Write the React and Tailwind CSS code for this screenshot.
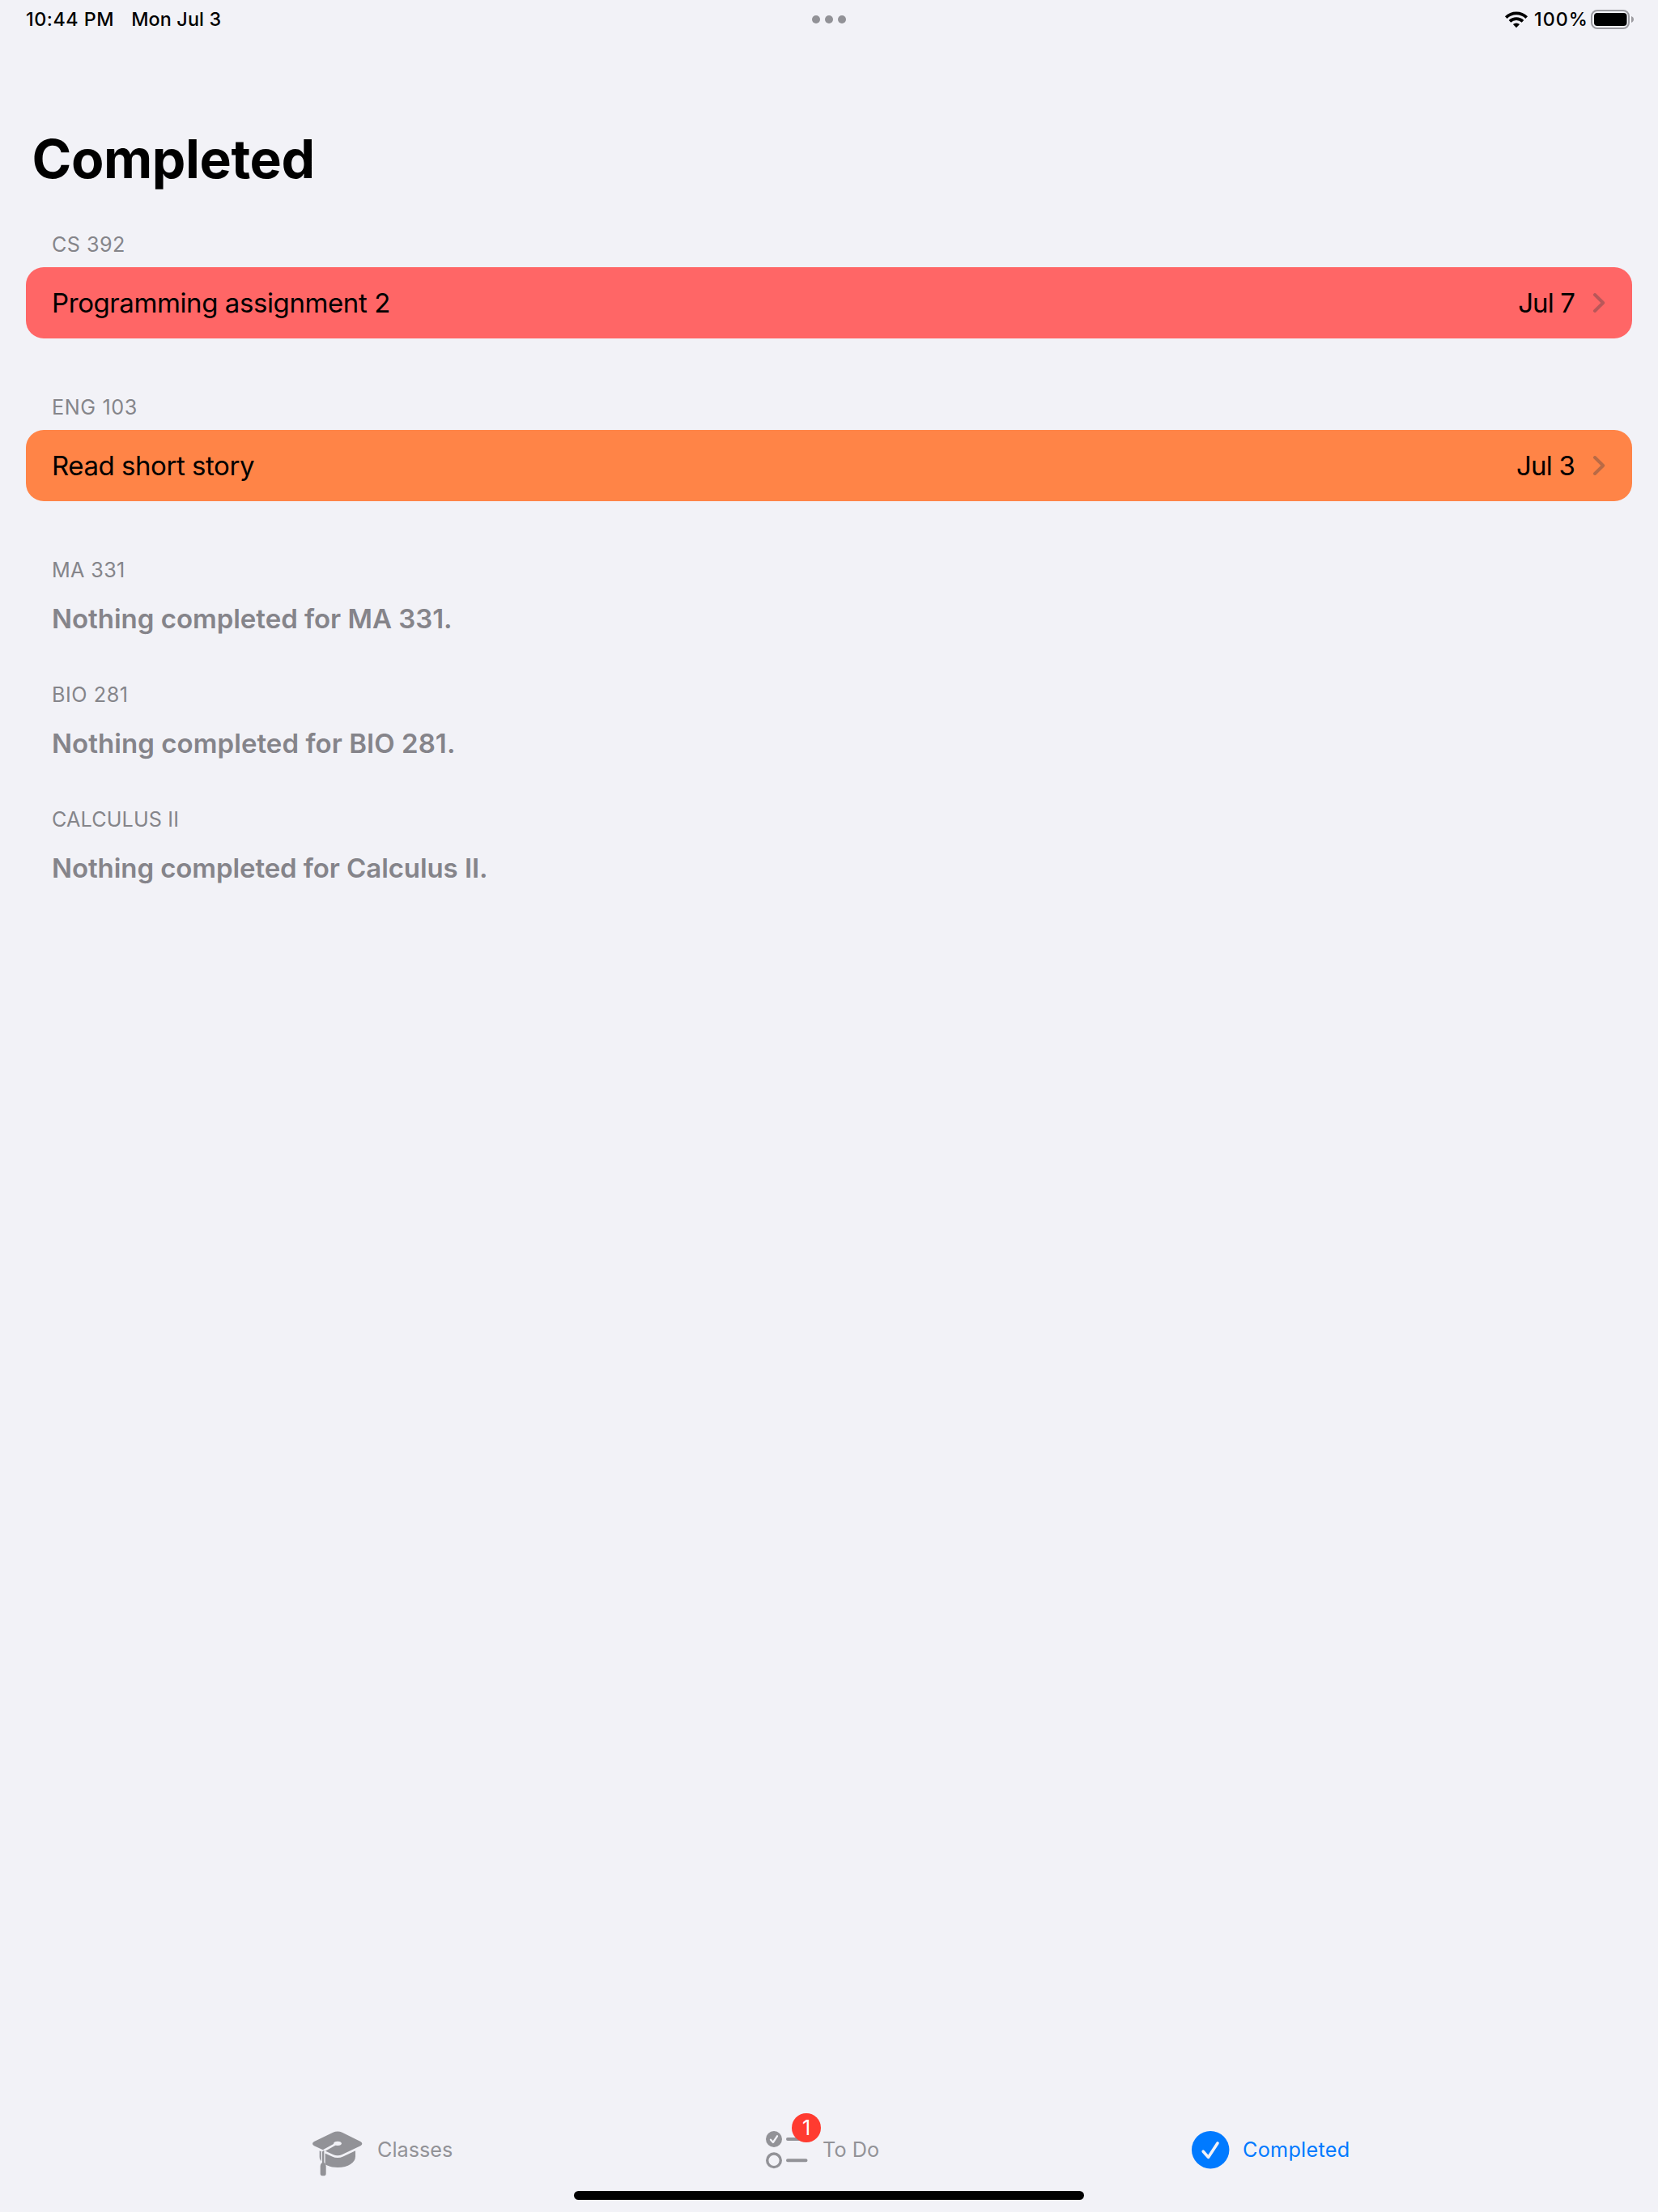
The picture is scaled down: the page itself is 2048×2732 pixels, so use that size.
import React from "react";

const SECTIONS = [
  { name: "CS 392", spacing: "tracking-[0.44px]", item: "Programming assignment 2", itemSpacing: "tracking-[-0.41px]", due: "Jul 7", dueSpacing: "tracking-[-0.9px]", color: "bg-[#ff6666]" },
  { name: "ENG 103", spacing: "tracking-[0.6px]", item: "Read short story", itemSpacing: "tracking-[-0.45px]", due: "Jul 3", dueSpacing: "tracking-[-0.8px]", color: "bg-[#ff8447]" },
  { name: "MA 331", spacing: "tracking-[0.34px]", itemSpacing: "tracking-[-0.02px]" },
  { name: "BIO 281", spacing: "tracking-[0.54px]", itemSpacing: "tracking-[0.06px]" },
  { name: "CALCULUS II", label: "Calculus II", spacing: "tracking-[0.12px]", itemSpacing: "tracking-[-0.085px]" },
];

function WifiIcon() {
  return (
    <svg className="h-[22px] w-[30px]" viewBox="0 0 30 22" fill="none" stroke="#000" strokeWidth="3.8">
      <path d="M2.3 8.6A18.2 18.2 0 0 1 27.7 8.6" />
      <path d="M7 13.4A11.6 11.6 0 0 1 23 13.4" />
      <path d="M15 21.2L10.9 17.1A5.9 5.9 0 0 1 19.1 17.1Z" fill="#000" stroke="none" />
    </svg>
  );
}

function BatteryIcon() {
  return (
    <svg className="h-6 w-[54px]" viewBox="0 0 54 24">
      <rect x="1" y="1" width="46" height="22" rx="7" fill="none" stroke="#9c9ba0" strokeWidth="2" />
      <rect x="4" y="4" width="40.5" height="16" rx="4" fill="#000" />
      <path d="M50 8C52 8.8 53 10.2 53 12S52 15.2 50 16Z" fill="#9c9ba0" />
    </svg>
  );
}

function CapIcon() {
  return (
    <svg className="h-14 w-[62px]" viewBox="48 96 186 168">
      <path d="M74 150V192C74 198 76 204 82 210C93 221 112 231 142 231C180 231 207 214 207 190V150Z" fill="#929297" />
      <path d="M54 135L124 101Q141 94 158 101L226 135Q238 143 226 151L158 183Q141 191 124 183L54 151Q42 143 54 135Z" fill="#929297" stroke="#f2f2f7" strokeWidth="16" />
      <path d="M54 135L124 101Q141 94 158 101L226 135Q238 143 226 151L158 183Q141 191 124 183L54 151Q42 143 54 135Z" fill="#929297" />
      <path d="M87.5 225V174Q87.5 170 91 168L132 145" fill="none" stroke="#f2f2f7" strokeWidth="8" />
      <path d="M87.5 225V172" stroke="#f2f2f7" strokeWidth="15" />
      <ellipse cx="141" cy="142" rx="14.5" ry="8" fill="#f2f2f7" />
      <path d="M84 174Q84 170 91 168V212Q98 218 98 226V254Q98 262 87.5 262Q77 262 77 254V226Q77 218 84 212Z" fill="#929297" />
    </svg>
  );
}

function ChecklistIcon() {
  return (
    <svg className="h-[47px] w-[52px]" viewBox="0 0 52 47" fill="none" strokeLinecap="round">
      <circle cx="10" cy="10" r="10" fill="#929297" />
      <path d="M6 10.7L8.9 14L14 6.3" stroke="#f2f2f7" strokeWidth="2.3" strokeLinejoin="round" />
      <circle cx="10" cy="36.3" r="8.3" stroke="#929297" strokeWidth="3.4" />
      <path d="M27 10H49.5M27 36.3H49.5" stroke="#929297" strokeWidth="4" />
    </svg>
  );
}

function CheckCircleIcon() {
  return (
    <svg className="h-[47px] w-[47px]" viewBox="0 0 47 47" fill="none">
      <circle cx="23.2" cy="23.2" r="23.2" fill="#007aff" />
      <path d="M14.2 25.2L20.5 32.4L32 15" stroke="#f2f2f7" strokeWidth="3.6" strokeLinecap="round" strokeLinejoin="round" />
    </svg>
  );
}

function Chevron() {
  return (
    <svg className="h-6 w-4" viewBox="0 0 16 24" fill="none" stroke="#3c3c43" strokeOpacity="0.36" strokeWidth="3.9" strokeLinecap="round" strokeLinejoin="round">
      <path d="M2 2L12.2 12L2 22" />
    </svg>
  );
}

function StatusBar() {
  return (
    <header className="grid h-12 grid-cols-3 text-[23.3px] leading-[48px] font-medium">
      <div className="flex gap-[21px] pl-8">
        <span className="tracking-[0.55px]">10:44 PM</span>
        <span className="tracking-[0.15px]">Mon Jul 3</span>
      </div>
      <div className="flex items-center justify-center gap-1.5">
        <i className="size-2.5 rounded-full bg-[#929297]" />
        <i className="size-2.5 rounded-full bg-[#929297]" />
        <i className="size-2.5 rounded-full bg-[#929297]" />
      </div>
      <div className="flex items-center justify-end pr-[29px]">
        <WifiIcon />
        <span className="ml-[7px] w-[70px] tracking-[1px]">100%</span>
        <BatteryIcon />
      </div>
    </header>
  );
}

function Section({ section }) {
  return (
    <section className={section.item ? "pb-[69px]" : "pb-[46px]"}>
      <h2 className={`mb-3 px-8 text-[25.2px] leading-8 text-[#85858a] ${section.spacing}`}>{section.name}</h2>
      {section.item ? (
        <div className={`flex h-[88px] items-center rounded-[22px] px-8 text-[33px] leading-10 ${section.color}`}>
          <span className={`flex-1 ${section.itemSpacing}`}>{section.item}</span>
          <span className={`mr-[23px] ${section.dueSpacing}`}>{section.due}</span>
          <Chevron />
        </div>
      ) : (
        <p className={`px-8 text-[33px] leading-[64px] font-semibold text-[#85848a] ${section.itemSpacing}`}>
          Nothing completed for {section.label || section.name}.
        </p>
      )}
    </section>
  );
}

function TabBar() {
  return (
    <nav className="flex h-[94px] items-center pl-[386px] text-[25.2px] leading-8 text-[#929297]">
      <div className="flex w-[560px] items-center">
        <div className="pt-[10px]"><CapIcon /></div>
        <span className="ml-[18px] tracking-[0px]">Classes</span>
      </div>
      <div className="flex w-[526px] items-center">
        <div className="relative">
          <ChecklistIcon />
          <span className="absolute -top-[22px] left-8 flex size-9 items-center justify-center rounded-full bg-[#ff3b30] text-white">1</span>
        </div>
        <span className="ml-[18px] tracking-[0.09px]">To Do</span>
      </div>
      <div className="flex items-center text-[#007aff]">
        <CheckCircleIcon />
        <span className="ml-4 tracking-[0.28px]">Completed</span>
      </div>
    </nav>
  );
}

export default function App() {
  return (
    <div className="flex h-[2732px] w-[2048px] flex-col overflow-hidden bg-[#f2f2f7] font-['Inter',sans-serif] text-black">
      <StatusBar />
      <h1 className="mt-[108px] pl-[39.5px] text-[66px] leading-[80px] font-bold tracking-[-0.4px]">Completed</h1>
      <main className="flex-1 px-8 pt-[50px]">
        {SECTIONS.map((s) => (
          <Section key={s.name} section={s} />
        ))}
      </main>
      <TabBar />
      <div className="flex h-[30px] items-start justify-center">
        <div className="mt-1 h-[11px] w-[630px] rounded-full bg-black" />
      </div>
    </div>
  );
}
